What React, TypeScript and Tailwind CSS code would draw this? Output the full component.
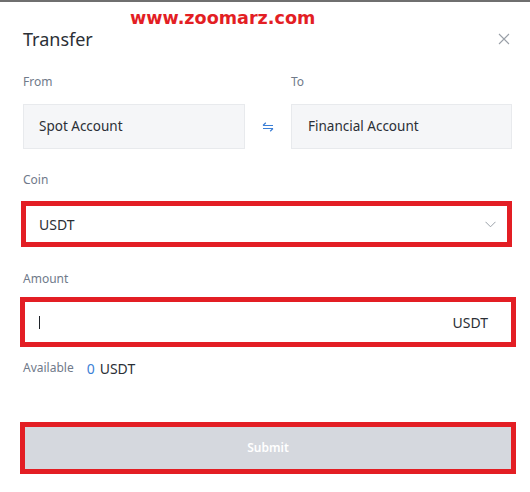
import React from "react";

export default function App() {
  const font = { fontFamily: '"Noto Sans", "Open Sans", Arial, sans-serif' };
  return (
    <div className="w-[530px] h-[492px] bg-white border-t-2 border-[#6f6f6f] relative overflow-hidden" style={font}>
      <div className="absolute left-[130px] top-[4px] text-[17.6px] font-bold text-[#e31e24] leading-[24px]" style={{ fontFamily: '"DejaVu Sans", Verdana, sans-serif' }}>
        www.zoomarz.com
      </div>
      <div className="flex flex-col pl-[23px] pr-[18px]">
        <div className="flex items-center justify-between h-[24px] mt-[25px]">
          <span className="text-[18px] text-[#2b2f36] leading-[24px]">Transfer</span>
          <svg width="12" height="12" viewBox="0 0 12 12" className="mr-[2px]">
            <path d="M1 1 L11 11 M11 1 L1 11" stroke="#9aa0a8" strokeWidth="1.1" fill="none" />
          </svg>
        </div>
        <div className="flex mt-[23px] text-[12px] text-[#707a8a] leading-[16px]">
          <span className="w-[268px]">From</span>
          <span>To</span>
        </div>
        <div className="flex items-center mt-[14px]">
          <div className="w-[222px] h-[45px] bg-[#f5f6f8] border border-[#e8eaed] flex items-center pl-[15px] text-[13.5px] text-[#2b2f36]">
            Spot Account
          </div>
          <div className="w-[46px] flex justify-center">
            <svg width="12" height="10" viewBox="0 0 12 10">
              <path d="M1 3.5 H11 M1 3.5 L3.8 0.8 M11 6.5 H1 M11 6.5 L8.2 9.2" stroke="#3b7fd6" strokeWidth="1.2" fill="none" />
            </svg>
          </div>
          <div className="w-[221px] h-[45px] bg-[#f5f6f8] border border-[#e8eaed] flex items-center pl-[16px] text-[13.5px] text-[#2b2f36]">
            Financial Account
          </div>
        </div>
        <div className="mt-[23px] text-[12px] text-[#707a8a] leading-[16px]">Coin</div>
      </div>
      <div className="ml-[21px] mt-[13px] w-[491px] h-[46px] border-[5px] border-[#e31e24] flex items-center justify-between pl-[13px] pr-[11px]">
        <span className="text-[14px] text-[#2b2f36]">USDT</span>
        <svg width="11" height="7" viewBox="0 0 11 7">
          <path d="M0.5 0.8 L5.5 5.8 L10.5 0.8" stroke="#9aa0a8" strokeWidth="1" fill="none" />
        </svg>
      </div>
      <div className="pl-[23px] mt-[24px] text-[12px] text-[#707a8a] leading-[16px]">Amount</div>
      <div className="ml-[20px] mt-[10px] w-[496px] h-[50px] border-[5px] border-[#e31e24] flex items-center justify-between pl-[14px] pr-[23px]">
        <span className="w-[1px] h-[13px] bg-[#1e2329]" />
        <span className="text-[14px] text-[#2b2f36]">USDT</span>
      </div>
      <div className="pl-[23px] mt-[12px] flex items-center h-[18px]">
        <span className="text-[12px] text-[#707a8a]">Available</span>
        <span className="ml-[13px] text-[14px] text-[#3b7fd6]">0</span>
        <span className="ml-[5px] text-[14px] text-[#2b2f36]">USDT</span>
      </div>
      <div className="ml-[20px] mt-[45px] w-[496px] h-[52px] border-[5px] border-[#e31e24] bg-[#d5d8de] flex items-center justify-center">
        <span className="text-[12px] font-semibold text-white">Submit</span>
      </div>
    </div>
  );
}
